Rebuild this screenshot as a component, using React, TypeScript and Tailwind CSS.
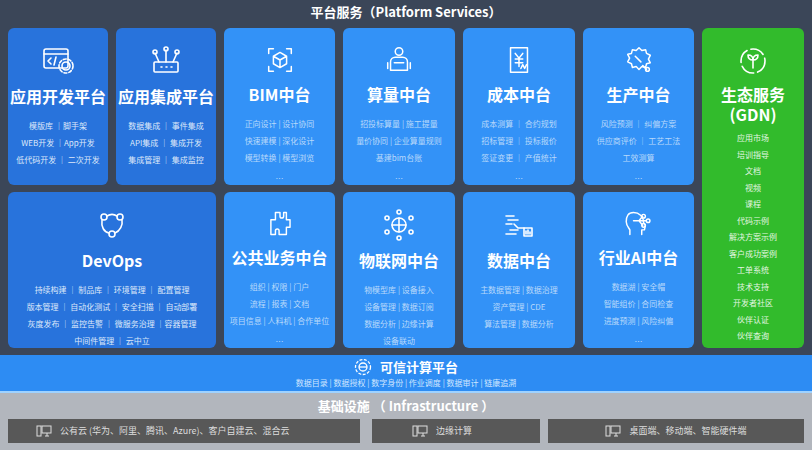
import React from "react";

const F = { fontFamily: '"Noto Sans CJK SC","Noto Sans",sans-serif' };

const S = (p: { children: React.ReactNode }) => (
  <svg width="34" height="34" viewBox="0 0 34 34" fill="none" stroke="white" strokeWidth="1.6" strokeLinecap="round" strokeLinejoin="round">{p.children}</svg>
);

const icons: Record<string, React.ReactNode> = {
  dev: <S><rect x="3" y="5" width="24" height="19" rx="2"/><path d="M3 10h24M10 14l-3 3 3 3M15 13l-2 8"/><circle cx="25" cy="22" r="4"/><circle cx="25" cy="22" r="7" strokeDasharray="3 2"/></S>,
  int: <S><rect x="5" y="18" width="24" height="10" rx="1"/><path d="M17 18V6M10 18l-4-9M24 18l4-9"/><circle cx="17" cy="5" r="2"/><circle cx="6" cy="8" r="2"/><circle cx="28" cy="8" r="2"/><path d="M12 23h1M17 23h1M22 23h1"/></S>,
  bim: <S><path d="M5 10V5h5M24 5h5v5M29 24v5h-5M10 29H5v-5"/><path d="M17 9l7 4v8l-7 4-7-4v-8zM10 13l7 4 7-4M17 17v8"/></S>,
  calc: <S><circle cx="17" cy="8" r="4"/><path d="M8 28v-9a5 5 0 015-5h8a5 5 0 015 5v9zM5 20v6M29 20v6M12 20h10"/></S>,
  cost: <S><path d="M8 4h18v26H8z"/><path d="M13 10l4 5 4-5M13 16h8M13 20h8M17 15v9M19 26l2-4 2 4 2-4"/></S>,
  prod: <S><path d="M17 4l3 3 4-1 1 4 4 2-2 4 2 4-4 1-1 4-4-1-3 3-3-3-4 1-1-4-4-2 2-4-2-4 4-1 1-4 4 1z"/><path d="M13 13l6 6M21 23l4 4"/><circle cx="26" cy="27" r="2"/></S>,
  eco: <S><circle cx="17" cy="17" r="12" strokeDasharray="14 4"/><path d="M17 24v-8M17 16c-4 0-5-3-5-5 3 0 5 2 5 5zM17 16c4 0 5-3 5-5-3 0-5 2-5 5z"/></S>,
  ops: <S><circle cx="9" cy="9" r="3"/><circle cx="25" cy="9" r="3"/><circle cx="17" cy="26" r="3"/><path d="M12 8c3-2 7-2 10 0M27 12c1 5-2 11-7 13M14 25c-5-1-8-6-7-13"/></S>,
  pub: <S><path d="M12 5h5v4a2 2 0 104 0V5h3v8h4v8h-4v8h-8v-4a2 2 0 10-4 0v4H7V13h5z"/></S>,
  iot: <S><circle cx="17" cy="17" r="7"/><path d="M10 17h14M17 10v14"/><circle cx="17" cy="4" r="2"/><circle cx="17" cy="30" r="2"/><circle cx="5" cy="10" r="2"/><circle cx="29" cy="10" r="2"/><circle cx="5" cy="24" r="2"/><circle cx="29" cy="24" r="2"/></S>,
  data: <S><path d="M4 8h8M6 12h10M4 16h6M12 16l4 4h6M8 22h8M4 26h10"/><rect x="22" y="20" width="8" height="8"/><path d="M24 26v-3M26 26v-4M28 26v-2"/></S>,
  ai: <S><path d="M20 29v-5h3l1-5-2-3c0-7-5-11-11-11S3 9 3 15c0 4 3 7 4 9v5"/><path d="M11 14h6M17 14l4-5M17 14h8M17 14l4 5"/><circle cx="22" cy="9" r="2"/><circle cx="27" cy="14" r="2"/><circle cx="22" cy="19" r="2"/></S>,
};

type CardP = { icon: string; title: React.ReactNode; lines: string[]; dark?: boolean; dots?: boolean; className?: string };
function Card({ icon, title, lines, dark, dots, className = "" }: CardP) {
  return (
    <div className={`rounded-md flex flex-col items-center pt-4 ${dark ? "bg-[#2873dc]" : "bg-[#3392f7]"} ${className}`}>
      {icons[icon]}
      <div className="text-white font-bold text-[16px] mt-1.5 leading-6 text-center">{title}</div>
      <div className={`mt-3 flex flex-col items-center gap-[5px] text-[8px] leading-[12px] ${dark ? "text-[#dde8fa]" : "text-[#b9d9fb]"}`}>
        {lines.map((l, i) => <div key={i} className="whitespace-nowrap">{l}</div>)}
        {dots && <div className="mt-1">…</div>}
      </div>
    </div>
  );
}

const Mon = () => (
  <svg width="16" height="14" viewBox="0 0 16 14" fill="none" stroke="#ddd" strokeWidth="1"><rect x="1" y="2" width="4" height="10"/><rect x="6" y="2" width="9" height="7"/><path d="M9 12h4M11 9v3"/></svg>
);

export default function App() {
  return (
    <div style={F} className="w-[812px] h-[450px] bg-[#3b4658] flex flex-col overflow-hidden">
      <div className="text-white font-bold text-[13px] text-center h-7 leading-6">平台服务（Platform Services）</div>
      <div className="grid grid-cols-[100fr_100fr_111fr_112fr_112fr_111fr_102fr] grid-rows-[157px_156px] gap-x-2 gap-y-[7px] px-2">
        <Card dark icon="dev" title="应用开发平台" lines={["模版库 ｜脚手架", "WEB开发 ｜App开发", "低代码开发 ｜ 二次开发"]} />
        <Card dark icon="int" title="应用集成平台" lines={["数据集成 ｜ 事件集成", "API集成 ｜ 集成开发", "集成管理 ｜ 集成监控"]} />
        <Card icon="bim" title="BIM中台" dots lines={["正向设计 | 设计协同", "快速建模 | 深化设计", "模型转换 | 模型浏览"]} />
        <Card icon="calc" title="算量中台" dots lines={["招投标算量 | 施工提量", "量价协同 | 企业算量规则", "基建bim台账"]} />
        <Card icon="cost" title="成本中台" dots lines={["成本测算 ｜ 合约规划", "招标管理 ｜ 投标报价", "签证变更 ｜ 产值统计"]} />
        <Card icon="prod" title="生产中台" dots lines={["风险预测 ｜ 纠偏方案", "供应商评价 ｜ 工艺工法", "工效测算"]} />
        <div className="row-span-2 rounded-md bg-[#32bb2c] flex flex-col items-center pt-4">
          {icons.eco}
          <div className="text-white font-bold text-[16px] mt-1.5 leading-[20px] text-center">生态服务<br />(GDN)</div>
          <div className="mt-2 flex flex-col items-center gap-[4.5px] text-[8px] leading-[12px] text-[#e3f6e1]">
            {["应用市场","培训指导","文档","视频","课程","代码示例","解决方案示例","客户成功案例","工单系统","技术支持","开发者社区","伙伴认证","伙伴查询"].map(t => <div key={t}>{t}</div>)}
          </div>
        </div>
        <Card dark icon="ops" title="DevOps" className="col-span-2" lines={["持续构建 ｜ 制品库 ｜ 环境管理 ｜ 配置管理", "版本管理 ｜ 自动化测试 ｜ 安全扫描 ｜ 自动部署", "灰度发布 ｜ 监控告警 ｜ 微服务治理 ｜容器管理", "中间件管理 ｜ 云中立"]} />
        <Card icon="pub" title="公共业务中台" dots lines={["组织 | 权限 | 门户", "流程 | 报表 | 文档", "项目信息 | 人料机 | 合作单位"]} />
        <Card icon="iot" title="物联网中台" lines={["物模型库 | 设备接入", "设备管理 | 数据订阅", "数据分析 | 边缘计算", "设备联动"]} />
        <Card icon="data" title="数据中台" lines={["主数据管理 | 数据治理", "资产管理 | CDE", "算法管理 | 数据分析"]} />
        <Card icon="ai" title="行业AI中台" dots lines={["数据湖 | 安全帽", "智能组价 | 合同检查", "进度预测 | 风险纠偏"]} />
      </div>
      <div className="mt-[7px] h-[38px] bg-[#2d8cf3] flex flex-col items-center border-b-2 border-[#9fd2ff]">
        <div className="flex items-center gap-2 mt-[2px]">
          <svg width="18" height="18" viewBox="0 0 18 18" fill="none" stroke="white" strokeWidth="1.3"><circle cx="9" cy="9" r="7.5" strokeDasharray="3 1.5"/><circle cx="9" cy="9" r="4"/><path d="M5 9h8"/></svg>
          <span className="text-white font-bold text-[13px] leading-5">可信计算平台</span>
        </div>
        <div className="text-[8px] text-[#cfe6ff] leading-3">数据目录 | 数据授权 | 数字身份 | 作业调度 | 数据审计 | 链康追溯</div>
      </div>
      <div className="flex-1 bg-[#b2b6bd] flex flex-col items-center px-2">
        <div className="text-white font-bold text-[13px] leading-[26px]">基础设施 （ Infrastructure ）</div>
        <div className="flex w-full h-[24px]">
          <div className="w-[352px] bg-[#585858] flex items-center gap-2 pl-[28px] text-[9px] text-[#ddd] whitespace-nowrap"><Mon />公有云 (华为、阿里、腾讯、Azure)、客户自建云、混合云</div>
          <div className="ml-[12px] w-[168px] bg-[#585858] flex items-center gap-2 pl-[40px] text-[9px] text-[#ddd]"><Mon />边缘计算</div>
          <div className="ml-[8px] flex-1 bg-[#585858] flex items-center justify-center gap-2 text-[9px] text-[#ddd]"><Mon />桌面端、移动端、智能硬件端</div>
        </div>
      </div>
    </div>
  );
}
